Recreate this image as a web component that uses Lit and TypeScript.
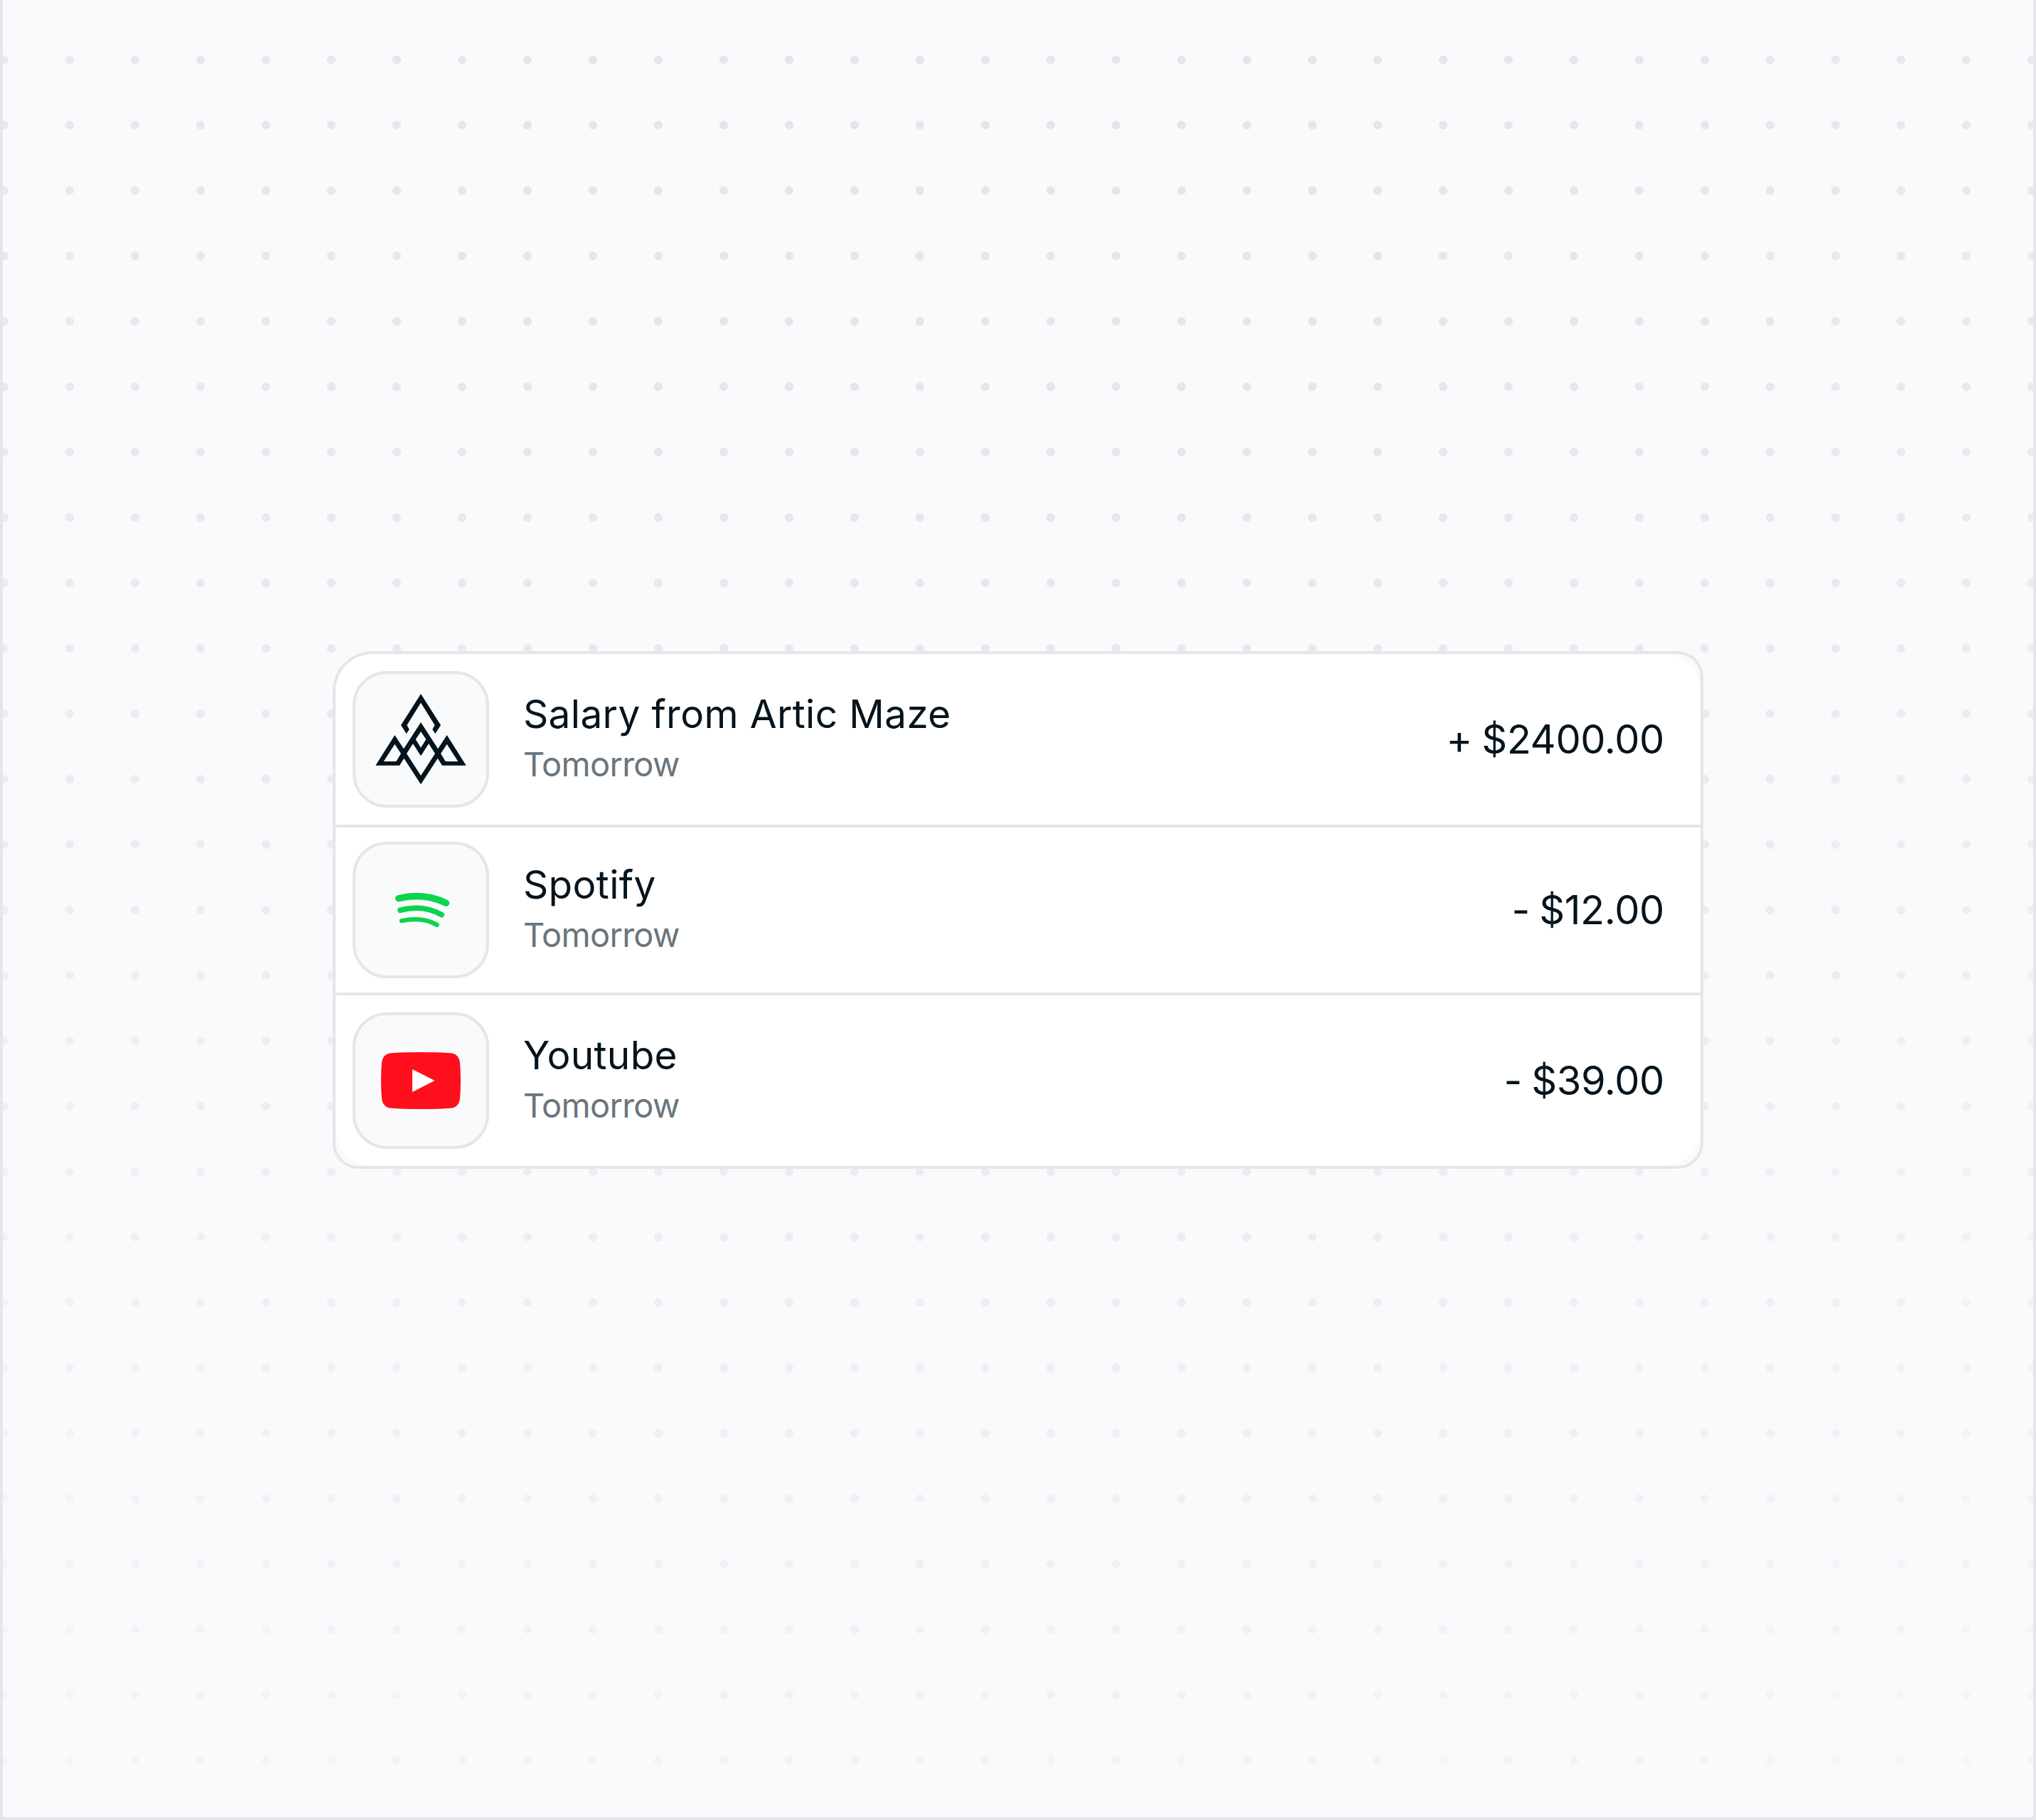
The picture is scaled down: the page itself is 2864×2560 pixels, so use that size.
import { LitElement, html, svg, css } from "lit";
import { customElement, property } from "lit/decorators.js";

type Brand = "maze" | "spotify" | "youtube";

interface Transaction {
  brand: Brand;
  name: string;
  date: string;
  amount: string;
}

const transactions: Transaction[] = [
  { brand: "maze", name: "Salary from Artic Maze", date: "Tomorrow", amount: "+ $2400.00" },
  { brand: "spotify", name: "Spotify", date: "Tomorrow", amount: "- $12.00" },
  { brand: "youtube", name: "Youtube", date: "Tomorrow", amount: "- $39.00" },
];

const logos = {
  maze: svg`
    <g fill="#04131c" fill-rule="evenodd">
      <path d="M92 28 L64 72 L71.7 84 L75.7 78 L72.4 72 L92 40.5 L111.6 72 L108.3 78 L112.3 84 L120 72 Z" />
      <path
        d="M92 68 L67.9 105.3 L55.3 86 L28.3 128.7 H62 L68.3 118.7 L92 155.3 L115.7 118.7 L122 128.7 H155.7 L128.7 86 L116.1 105.3 Z
           M92 81 L84.7 92 L92 103.7 L99.3 92 Z
           M80.9 98 L72 112 L92 143 L112 112 L103.1 98 L92 115.3 Z
           M55.3 98.7 L39.7 123 H57.3 L64 112 Z
           M128.7 98.7 L144.3 123 H126.7 L120 112 Z"
      />
    </g>`,
  spotify: svg`
    <g fill="none" stroke="#0cd44c" stroke-linecap="round">
      <path d="M60.7 75.7 Q96 67 127.5 82.3" stroke-width="9.4" />
      <path d="M63 92.3 Q95 84 121.3 98.7" stroke-width="7.6" />
      <path d="M65 107.3 Q94 101 114.7 113" stroke-width="6.2" />
    </g>`,
  youtube: svg`
    <path
      fill="#ff0f1c"
      d="M92 52 Q118 52 134 53.3 Q145.5 54.5 147 67 Q148 79 148 92 Q148 105 147 117 Q145.5 129.5 134 130.7 Q118 132 92 132 Q66 132 50 130.7 Q38.5 129.5 37 117 Q36 105 36 92 Q36 79 37 67 Q38.5 54.5 50 53.3 Q66 52 92 52 Z"
    />
    <path fill="#fff" d="M80 76 L111.5 92 L80 108 Z" />`,
};

@customElement("brand-tile")
export class BrandTile extends LitElement {
  static styles = css`
    :host {
      display: block;
      box-sizing: border-box;
      width: 192px;
      height: 192px;
      border: 4px solid #e5e6ea;
      border-radius: 48px;
      background: #f9fafc;
    }
    .logo {
      display: block;
      width: 184px;
      height: 184px;
    }
  `;

  @property()
  brand: Brand = "maze";

  render() {
    return html`<svg class="logo" viewBox="0 0 184 184">${logos[this.brand]}</svg>`;
  }
}

@customElement("app-root")
export class AppRoot extends LitElement {
  static styles = css`
    :host {
      display: block;
      font-family: Inter, "Liberation Sans", sans-serif;
      color: #04131c;
    }

    .stage {
      box-sizing: border-box;
      display: grid;
      place-items: center;
      width: 2864px;
      height: 2560px;
      border: 4px solid #e5e6ea;
      border-top: 0;
      background: #f9fafc;
    }

    .stage > * {
      grid-area: 1 / 1;
    }

    /* dotted backdrop, fading towards the bottom and the sides */
    .dots {
      width: 100%;
      height: 100%;
      background: radial-gradient(circle at 46px 46px, #e5e6ea 5.6px, transparent 6.4px) -44px 38px / 92px 92px;
      mask-image:
        radial-gradient(ellipse 3000px 4000px at 50% 0, #000 20%, rgb(0 0 0 / 0.88) 44%, rgb(0 0 0 / 0.4) 76%, rgb(0 0 0 / 0.2) 100%),
        linear-gradient(#000 20%, rgb(0 0 0 / 0.75) 65%, rgb(0 0 0 / 0.6) 97%);
      mask-composite: intersect;
    }

    .card {
      z-index: 1;
      box-sizing: border-box;
      width: 1928px;
      height: 728px;
      margin-top: 4px;
      border: 4px solid #e5e6ea;
      border-radius: 56px 36px 36px 36px;
      background: #f9fafc;
      overflow: hidden;
    }

    .list {
      list-style: none;
      margin: 0;
      padding: 0;
      border-radius: 52px;
      background: #fff;
    }

    .row {
      box-sizing: border-box;
      display: flex;
      align-items: center;
      gap: 48px;
      height: 240px;
      padding: 0 51px 0 24px;
    }

    .row.-middle {
      border: 4px solid #e5e6ea;
      border-width: 4px 0;
    }

    .txt {
      flex: 1;
    }

    .name,
    .date {
      margin: 0;
      white-space: nowrap;
    }

    .name {
      font-size: 55px;
      line-height: 70px;
      letter-spacing: 0.3px;
    }

    .date {
      font-size: 47px;
      line-height: 72px;
      letter-spacing: -0.7px;
      color: #6a757c;
    }

    .amount {
      font-size: 56px;
      line-height: 72px;
      letter-spacing: -0.4px;
      word-spacing: -2px;
      white-space: nowrap;
    }
  `;

  render() {
    return html`
      <main class="stage">
        <div class="dots"></div>
        <section class="card">
          <ul class="list">
            ${transactions.map(
              (t, i) => html`
                <li class="row ${i === 1 ? "-middle" : ""}">
                  <brand-tile .brand=${t.brand}></brand-tile>
                  <div class="txt">
                    <p class="name">${t.name}</p>
                    <p class="date">${t.date}</p>
                  </div>
                  <span class="amount">${t.amount}</span>
                </li>
              `
            )}
          </ul>
        </section>
      </main>
    `;
  }
}
